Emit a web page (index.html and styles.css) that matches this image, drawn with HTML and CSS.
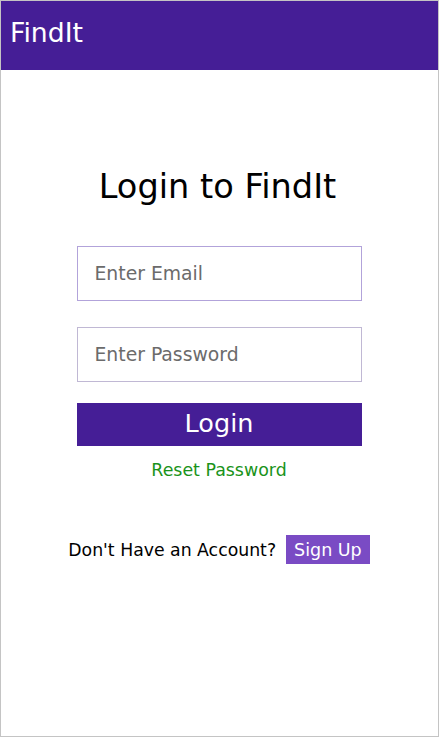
FILE: index.html
```html
<!DOCTYPE html>
<html>
<head>
<meta charset="utf-8">
<link rel="stylesheet" href="styles.css">
</head>
<body>
<div class="app">
  <header class="topbar"><span class="brand">FindIt</span></header>
  <main class="login">
    <h1 class="title">Login to FindIt</h1>
    <input class="field field-email" type="email" placeholder="Enter Email">
    <input class="field field-pass" type="password" placeholder="Enter Password">
    <button class="btn-login">Login</button>
    <a class="reset" href="#">Reset Password</a>
    <div class="signup-row">
      <span class="signup-text">Don't Have an Account?</span>
      <button class="btn-signup">Sign Up</button>
    </div>
  </main>
</div>
</body>
</html>
```
FILE: styles.css
```css
html, body {
  margin: 0;
  padding: 0;
  background: #fff;
}
* { box-sizing: border-box; }
.app {
  width: 439px;
  height: 737px;
  border: 1px solid #c4c4c4;
  font-family: "DejaVu Sans", sans-serif;
  display: flex;
  flex-direction: column;
}
.topbar {
  height: 69px;
  background: #451e96;
  display: flex;
  align-items: center;
  padding-left: 9px;
}
.brand {
  color: #fff;
  font-size: 26.7px;
  line-height: 1;
  margin-top: -4px;
}
.login {
  display: flex;
  flex-direction: column;
  align-items: center;
  padding-right: 1px;
}
.title {
  margin: 98px 3px 0 0;
  font-size: 33.6px;
  font-weight: normal;
  line-height: 38px;
  color: #000;
  white-space: nowrap;
}
.field {
  width: 285px;
  height: 55px;
  margin: 40px 0 0 0;
  border: 1px solid #c0b8d4;
  padding: 0 0 0 17px;
  font-family: "DejaVu Sans", sans-serif;
  font-size: 18.8px;
  color: #333;
  background: #fff;
  outline: none;
}
.field-email { border-color: #b2a3da; }
.field-pass { margin-top: 26px; }
.field::placeholder { color: #6b6b6b; }
.btn-login {
  width: 285px;
  height: 43px;
  margin-top: 21px;
  border: none;
  background: #451e96;
  color: #fff;
  font-family: "DejaVu Sans", sans-serif;
  font-size: 25.5px;
  padding: 0 0 3px 0;
}
.reset {
  margin-top: 14px;
  color: #1a931a;
  text-decoration: none;
  font-size: 17.4px;
  line-height: 20px;
}
.signup-row {
  margin-top: 55px;
  display: flex;
  align-items: center;
  gap: 10px;
  white-space: nowrap;
}
.signup-text {
  font-size: 17.3px;
  color: #000;
}
.btn-signup {
  height: 29px;
  border: none;
  background: #7a4bc4;
  color: #fff;
  font-family: "DejaVu Sans", sans-serif;
  font-size: 17.5px;
  padding: 0 8px;
}
```
